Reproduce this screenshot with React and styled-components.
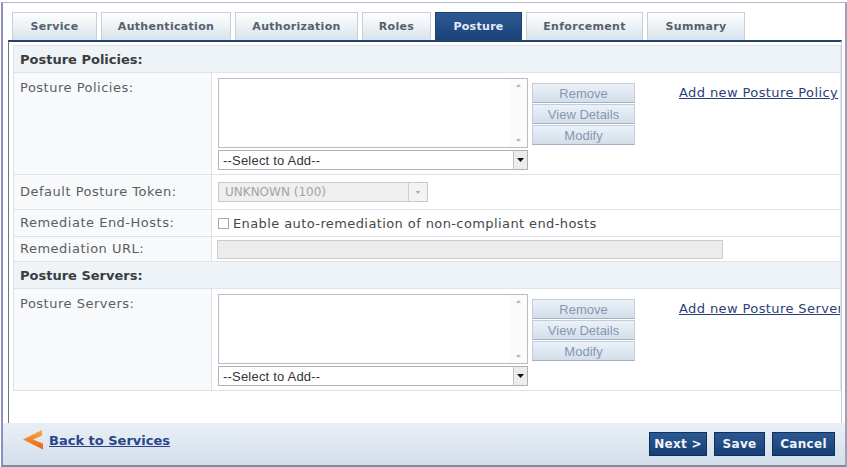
import React from "react";
import styled, { createGlobalStyle } from "styled-components";

const GlobalStyle = createGlobalStyle`
  html, body { margin: 0; padding: 0; background: #fff; }
  body { font-family: "DejaVu Sans", Verdana, sans-serif; }
  * { box-sizing: border-box; }
`;

const Window = styled.div`
  width: 847px;
  height: 467px;
  padding-top: 2px;
  padding-left: 1px;
  background: #fff;
`;

const Frame = styled.div`
  height: 100%;
  display: flex;
  flex-direction: column;
  border-top: 1px solid #b4b8c6;
  border-left: 2px solid #8e8fbf;
  border-right: 2px solid #9aa2b8;
  border-bottom: 2px solid #7d8aa8;
  overflow: hidden;
`;

const TabRow = styled.div`
  height: 37px;
  display: flex;
  align-items: flex-end;
  gap: 4px;
  padding: 0 0 0 9px;
`;

const Tab = styled.div`
  width: ${(p) => p.$w}px;
  height: 28px;
  display: flex;
  align-items: center;
  justify-content: center;
  border: 1px solid ${(p) => (p.$active ? "#1d4073" : "#c6d0da")};
  border-bottom: none;
  background: ${(p) =>
    p.$active
      ? "linear-gradient(#2d5a94, #1b4178)"
      : "linear-gradient(#fdfefe 0%, #eef3f7 45%, #d6e2ec 100%)"};
  color: ${(p) => (p.$active ? "#e4ecf6" : "#56616c")};
  font-weight: bold;
  font-size: 11px;
  letter-spacing: 0.3px;
`;

const Panel = styled.div`
  flex: 1;
  margin: 0 3px 0 5px;
  border-top: 2px solid #24436f;
  border-left: 1px solid #66768e;
  border-right: 1px solid #c4ccd8;
  padding: 3px 0 0 4px;
  background: #fff;
  overflow: hidden;
`;

const FormTable = styled.div`
  display: grid;
  grid-template-columns: 198px 1fr;
  border: 1px solid #dce3ea;
  border-bottom: none;
`;

const SectionHeader = styled.div`
  grid-column: 1 / -1;
  height: 27px;
  display: flex;
  align-items: center;
  padding-left: 6px;
  background: #eef3f7;
  border-bottom: 1px solid #dce3ea;
  color: #3a3d42;
  font-weight: bold;
  font-size: 13px;
`;

const LabelCell = styled.div`
  height: ${(p) => p.$h}px;
  display: flex;
  align-items: ${(p) => (p.$top ? "flex-start" : "center")};
  padding: ${(p) => (p.$top ? "7px 0 0 6px" : "0 0 0 6px")};
  background: #f7f9fb;
  border-right: 1px solid #dce3ea;
  border-bottom: 1px solid #dce3ea;
  color: #5a5e63;
  font-size: 13px;
  letter-spacing: 0.5px;
  line-height: 16px;
`;

const ValueCell = styled.div`
  height: ${(p) => p.$h}px;
  display: flex;
  align-items: ${(p) => (p.$top ? "flex-start" : "center")};
  padding: ${(p) => (p.$top ? "5px 0 0 6px" : "0 0 0 6px")};
  border-bottom: 1px solid #dce3ea;
  overflow: hidden;
  white-space: nowrap;
`;

const ListGroup = styled.div`
  width: 310px;
  flex: none;
  display: flex;
  flex-direction: column;
  gap: 2px;
`;

const ListBox = styled.div`
  height: 70px;
  border: 1px solid #b9bec6;
  background: #fff;
  display: flex;
  justify-content: flex-end;
`;

const ScrollTrack = styled.div`
  width: 18px;
  display: flex;
  flex-direction: column;
  justify-content: space-between;
  align-items: center;
  padding: 5px 0 5px;
  background: #fbfbfc;
`;

const SelectBox = styled.div`
  height: 20px;
  border: 1px solid #aeb3ba;
  background: #fff;
  display: flex;
  align-items: center;
  justify-content: space-between;
  padding-left: 4px;
  font-family: "Liberation Sans", Arial, sans-serif;
  font-size: 13px;
  letter-spacing: 0.2px;
  color: #34363a;
`;

const ArrowBox = styled.div`
  width: ${(p) => (p.$wide ? 19 : 14)}px;
  height: 100%;
  display: flex;
  align-items: center;
  justify-content: center;
  background: ${(p) => (p.$disabled ? "#f3f3f3" : "#ececec")};
  border-left: 1px solid ${(p) => (p.$disabled ? "#d0d0d0" : "#c4c4c4")};
`;

const ButtonStack = styled.div`
  width: 103px;
  flex: none;
  margin: 5px 0 0 4px;
  display: flex;
  flex-direction: column;
  gap: 1px;
`;

const SmallButton = styled.div`
  height: 20px;
  display: flex;
  align-items: center;
  justify-content: center;
  background: linear-gradient(#ecf1f8, #d3deea);
  border: 1px solid #c3cdd9;
  border-bottom-color: #a2b2c6;
  color: #8797b0;
  font-family: "Liberation Sans", Arial, sans-serif;
  font-size: 13px;
`;

const AddLink = styled.a`
  margin: 7px 0 0 44px;
  color: #2b3e7a;
  text-decoration: underline;
  font-size: 13px;
  letter-spacing: 0.4px;
  line-height: 16px;
  white-space: nowrap;
  cursor: pointer;
`;

const TokenSelect = styled.div`
  width: 210px;
  height: 20px;
  display: flex;
  align-items: center;
  justify-content: space-between;
  padding-left: 6px;
  background: #efefef;
  border: 1px solid #c8c8c8;
  color: #a4a4a4;
  font-size: 12px;
`;

const CheckLabel = styled.label`
  display: flex;
  align-items: center;
  gap: 4px;
  color: #45484c;
  font-size: 13px;
  letter-spacing: 0.4px;
`;

const CheckBox = styled.span`
  width: 11px;
  height: 11px;
  border: 1px solid #a6a8ac;
  background: #fff;
  flex: none;
`;

const UrlInput = styled.div`
  width: 506px;
  height: 19px;
  margin-left: -1px;
  background: #ececec;
  border: 1px solid #cbcbcb;
`;

const Footer = styled.div`
  height: 42px;
  flex: none;
  display: flex;
  align-items: center;
  justify-content: space-between;
  padding: 0 10px 0 20px;
  background: linear-gradient(#e9eff6, #d4dfeb);
`;

const BackLink = styled.a`
  display: flex;
  align-items: center;
  gap: 5px;
  margin-bottom: 8px;
  color: #2a4589;
  font-weight: bold;
  font-size: 13px;
  cursor: pointer;
  span { text-decoration: underline; }
`;

const ButtonBar = styled.div`
  display: flex;
  gap: 7px;
`;

const FooterButton = styled.button`
  width: ${(p) => p.$w}px;
  height: 24px;
  padding: 0;
  background: linear-gradient(#2b5893, #183f76);
  border: 1px solid #10305c;
  color: #f0f4fa;
  font-family: "DejaVu Sans", Verdana, sans-serif;
  font-weight: bold;
  font-size: 12px;
  letter-spacing: 0.3px;
  cursor: pointer;
`;

const Tri = ({ up, color = "#111", w = 7, h = 4 }) => (
  <svg width={w} height={h} viewBox="0 0 7 4">
    <polygon points={up ? "0,4 7,4 3.5,0" : "0,0 7,0 3.5,4"} fill={color} />
  </svg>
);

const Chevron = () => (
  <svg width="21" height="20" viewBox="0 0 21 20">
    <defs>
      <linearGradient id="chev" x1="0" y1="0" x2="0" y2="1">
        <stop offset="0" stopColor="#f9a84a" />
        <stop offset="1" stopColor="#e8620e" />
      </linearGradient>
    </defs>
    <polygon points="19,0 0,9.5 20,19.5 20,13.5 10,9.5 19,5.5" fill="url(#chev)" />
  </svg>
);

const tabs = [
  { label: "Service", w: 85 },
  { label: "Authentication", w: 130 },
  { label: "Authorization", w: 123 },
  { label: "Roles", w: 69 },
  { label: "Posture", w: 87, active: true },
  { label: "Enforcement", w: 117 },
  { label: "Summary", w: 98 },
];

const footerButtons = [
  { label: "Next >", w: 58 },
  { label: "Save", w: 51 },
  { label: "Cancel", w: 63 },
];

const ListRow = ({ label, link }) => (
  <>
    <LabelCell $h={102} $top>
      {label}
    </LabelCell>
    <ValueCell $h={102} $top>
      <ListGroup>
        <ListBox>
          <ScrollTrack>
            <Tri up color="#b8b8b8" w={5} h={3} />
            <Tri color="#b8b8b8" w={5} h={3} />
          </ScrollTrack>
        </ListBox>
        <SelectBox>
          --Select to Add--
          <ArrowBox>
            <Tri />
          </ArrowBox>
        </SelectBox>
      </ListGroup>
      <ButtonStack>
        <SmallButton>Remove</SmallButton>
        <SmallButton>View Details</SmallButton>
        <SmallButton>Modify</SmallButton>
      </ButtonStack>
      <AddLink>{link}</AddLink>
    </ValueCell>
  </>
);

export default function App() {
  return (
    <>
      <GlobalStyle />
      <Window>
        <Frame>
          <TabRow>
            {tabs.map((t) => (
              <Tab key={t.label} $w={t.w} $active={t.active}>
                {t.label}
              </Tab>
            ))}
          </TabRow>
          <Panel>
            <FormTable>
              <SectionHeader>Posture Policies:</SectionHeader>
              <ListRow label="Posture Policies:" link="Add new Posture Policy" />

              <LabelCell $h={35}>Default Posture Token:</LabelCell>
              <ValueCell $h={35}>
                <TokenSelect>
                  UNKNOWN (100)
                  <ArrowBox $wide $disabled>
                    <Tri color="#b0b0b0" w={6} h={3} />
                  </ArrowBox>
                </TokenSelect>
              </ValueCell>

              <LabelCell $h={27}>Remediate End-Hosts:</LabelCell>
              <ValueCell $h={27}>
                <CheckLabel>
                  <CheckBox />
                  Enable auto-remediation of non-compliant end-hosts
                </CheckLabel>
              </ValueCell>

              <LabelCell $h={25}>Remediation URL:</LabelCell>
              <ValueCell $h={25}>
                <UrlInput />
              </ValueCell>

              <SectionHeader>Posture Servers:</SectionHeader>
              <ListRow label="Posture Servers:" link="Add new Posture Server" />
            </FormTable>
          </Panel>
          <Footer>
            <BackLink>
              <Chevron />
              <span>Back to Services</span>
            </BackLink>
            <ButtonBar>
              {footerButtons.map((b) => (
                <FooterButton key={b.label} $w={b.w}>
                  {b.label}
                </FooterButton>
              ))}
            </ButtonBar>
          </Footer>
        </Frame>
      </Window>
    </>
  );
}
